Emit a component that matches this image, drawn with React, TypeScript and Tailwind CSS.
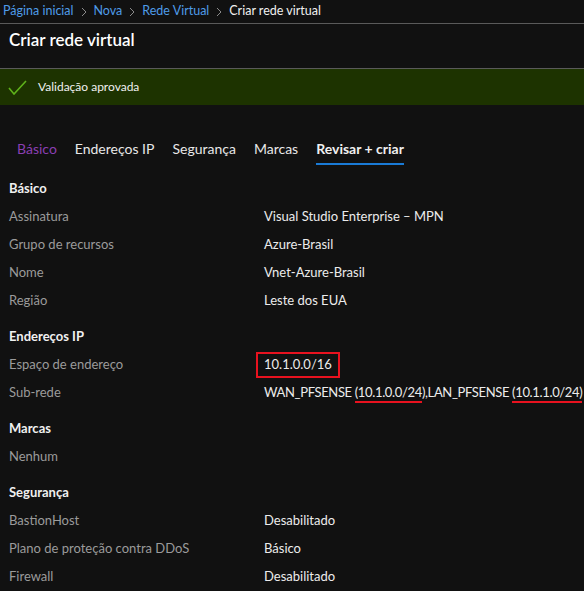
const font = { fontFamily: '"Segoe UI", Lato, "Noto Sans", sans-serif' };

type Row = { label: string; value?: React.ReactNode };

const Chevron = () => (
  <svg width="8" height="12" viewBox="0 0 8 12" className="mx-[6px]">
    <path d="M2 2l4 4-4 4" fill="none" stroke="#8a8a8a" strokeWidth="1" />
  </svg>
);

function Section({ title, rows }: { title: string; rows: Row[] }) {
  return (
    <div>
      <div className="h-[32px] pt-[5px] text-[13px] font-bold text-[#f0f0f0] leading-[24px]">{title}</div>
      {rows.map((r) => (
        <div key={r.label} className="flex h-[28px] items-center text-[13px]">
          <div className="w-[255px] shrink-0 text-[#9b9b9b]">{r.label}</div>
          <div className="whitespace-nowrap text-[#ececec]">{r.value}</div>
        </div>
      ))}
    </div>
  );
}

export default function App() {
  return (
    <div className="h-[591px] w-[584px] overflow-hidden bg-[#111111]" style={font}>
      <div className="flex h-[23px] items-center pl-[3px] text-[12.5px]">
        <span className="text-[#4f9ce8]">Página inicial</span>
        <Chevron />
        <span className="text-[#4f9ce8]">Nova</span>
        <Chevron />
        <span className="text-[#4f9ce8]">Rede Virtual</span>
        <Chevron />
        <span className="text-[#f0f0f0]">Criar rede virtual</span>
      </div>
      <div className="h-px bg-[#5a5a5a]" />
      <div className="h-[44px] pl-[9px] pt-[3px] text-[17px] font-semibold text-white">Criar rede virtual</div>
      <div className="h-px bg-[#5a5a5a]" />
      <div className="flex h-[36px] items-center gap-[11px] bg-[#1d3300] pl-[8px] text-[12px] text-[#f0f0f0]">
        <svg width="19" height="15" viewBox="0 0 19 15">
          <path d="M1 8l5 6L18 1" fill="none" stroke="#5fb21a" strokeWidth="1.6" />
        </svg>
        <span>Validação aprovada</span>
      </div>
      <div className="flex h-[60px] items-end gap-[18px] pl-[17px] text-[14px]">
        <div className="pb-[6px] text-[#8b3fb3]">Básico</div>
        <div className="pb-[6px] text-[#e8e8e8]">Endereços IP</div>
        <div className="pb-[6px] text-[#e8e8e8]">Segurança</div>
        <div className="pb-[6px] text-[#e8e8e8]">Marcas</div>
        <div className="border-b-2 border-[#1a7bd6] pb-[4px] font-bold text-[#f0f0f0]">Revisar + criar</div>
      </div>
      <div className="pl-[9px] pt-[6px]">
        <Section
          title="Básico"
          rows={[
            { label: "Assinatura", value: "Visual Studio Enterprise – MPN" },
            { label: "Grupo de recursos", value: "Azure-Brasil" },
            { label: "Nome", value: "Vnet-Azure-Brasil" },
            { label: "Região", value: "Leste dos EUA" },
          ]}
        />
        <div className="h-[4px]" />
        <Section
          title="Endereços IP"
          rows={[
            {
              label: "Espaço de endereço",
              value: (
                <span className="-ml-[8px] inline-block border-2 border-[#e8121f] px-[6px] py-[1px]">10.1.0.0/16</span>
              ),
            },
            {
              label: "Sub-rede",
              value: (
                <span className="tracking-[-0.35px]">
                  WAN_PFSENSE{" "}
                  <span className="border-b-2 border-[#e8121f] pb-[1px]">(10.1.0.0/24</span>),LAN_PFSENSE{" "}
                  <span className="border-b-2 border-[#e8121f] pb-[1px]">(10.1.1.0/24)</span>
                </span>
              ),
            },
          ]}
        />
        <div className="h-[4px]" />
        <Section title="Marcas" rows={[{ label: "Nenhum" }]} />
        <div className="h-[4px]" />
        <Section
          title="Segurança"
          rows={[
            { label: "BastionHost", value: "Desabilitado" },
            { label: "Plano de proteção contra DDoS", value: "Básico" },
            { label: "Firewall", value: "Desabilitado" },
          ]}
        />
      </div>
    </div>
  );
}
